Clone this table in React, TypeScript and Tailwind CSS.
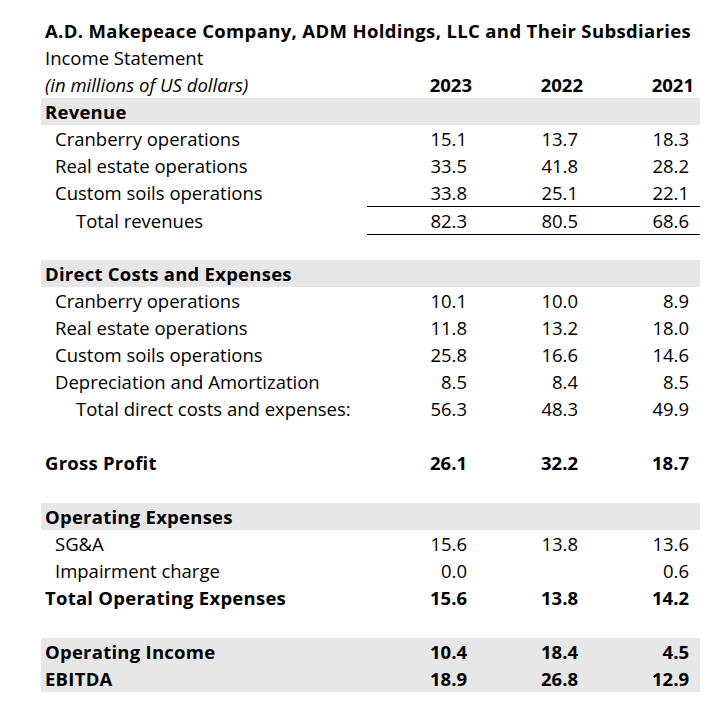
import React from 'react';

type Row = {
  label?: string;
  values?: (string | null)[];
  kind?: 'section' | 'item' | 'total' | 'bold' | 'blank' | 'underline' | 'shaded';
  indent?: 0 | 1 | 2;
};

const rows: Row[] = [
  { label: 'Revenue', kind: 'section' },
  { label: 'Cranberry operations', values: ['15.1', '13.7', '18.3'], indent: 1 },
  { label: 'Real estate operations', values: ['33.5', '41.8', '28.2'], indent: 1 },
  { label: 'Custom soils operations', values: ['33.8', '25.1', '22.1'], indent: 1 },
  { label: 'Total revenues', values: ['82.3', '80.5', '68.6'], indent: 2, kind: 'underline' },
  { kind: 'blank' },
  { label: 'Direct Costs and Expenses', kind: 'section' },
  { label: 'Cranberry operations', values: ['10.1', '10.0', '8.9'], indent: 1 },
  { label: 'Real estate operations', values: ['11.8', '13.2', '18.0'], indent: 1 },
  { label: 'Custom soils operations', values: ['25.8', '16.6', '14.6'], indent: 1 },
  { label: 'Depreciation and Amortization', values: ['8.5', '8.4', '8.5'], indent: 1 },
  { label: 'Total direct costs and expenses:', values: ['56.3', '48.3', '49.9'], indent: 2 },
  { kind: 'blank' },
  { label: 'Gross Profit', values: ['26.1', '32.2', '18.7'], kind: 'bold' },
  { kind: 'blank' },
  { label: 'Operating Expenses', kind: 'section' },
  { label: 'SG&A', values: ['15.6', '13.8', '13.6'], indent: 1 },
  { label: 'Impairment charge', values: ['0.0', null, '0.6'], indent: 1 },
  { label: 'Total Operating Expenses', values: ['15.6', '13.8', '14.2'], kind: 'bold' },
  { kind: 'blank' },
  { label: 'Operating Income', values: ['10.4', '18.4', '4.5'], kind: 'shaded' },
  { label: 'EBITDA', values: ['18.9', '26.8', '12.9'], kind: 'shaded' },
];

const indentClass = ['pl-1', 'pl-[14px]', 'pl-[35px]'];

function StatementRow({ row }: { row: Row }) {
  if (row.kind === 'blank') return <div className="h-[27px]" />;

  const shaded = row.kind === 'section' || row.kind === 'shaded';
  const bold = row.kind === 'section' || row.kind === 'bold' || row.kind === 'shaded';

  return (
    <div
      className={`grid h-[27px] grid-cols-[326px_111px_111px_111px] items-center ${shaded ? 'bg-[#e7e7e7]' : ''} ${bold ? 'font-bold' : ''}`}
    >
      <div
        className={`whitespace-nowrap ${bold ? 'tracking-[0.25px]' : ''} ${indentClass[row.indent ?? 0]}`}
      >
        {row.label}
      </div>
      {(row.values ?? [null, null, null]).map((v, i) => (
        <div
          key={i}
          className={`h-full pr-[11px] text-right leading-[27px] ${row.kind === 'underline' ? 'border-y border-black leading-[25px]' : ''}`}
        >
          {v}
        </div>
      ))}
    </div>
  );
}

export default function App() {
  return (
    <div className="min-h-[717px] bg-white text-black text-[18.5px] leading-[27px] font-['Open_Sans',sans-serif]">
      <div className="ml-[41px] w-[659px] pt-[17px]">
        <div className="h-[27px] whitespace-nowrap pl-1 font-bold tracking-[0.35px]">
          A.D. Makepeace Company, ADM Holdings, LLC and Their Subsdiaries
        </div>
        <div className="h-[27px] pl-1">Income Statement</div>
        <div className="grid h-[27px] grid-cols-[326px_111px_111px_111px] font-bold">
          <div className="pl-1 font-normal italic">(in millions of US dollars)</div>
          <div className="pr-[6px] text-right">2023</div>
          <div className="pr-[6px] text-right">2022</div>
          <div className="pr-[6px] text-right">2021</div>
        </div>
        {rows.map((row, i) => (
          <StatementRow key={i} row={row} />
        ))}
      </div>
    </div>
  );
}
